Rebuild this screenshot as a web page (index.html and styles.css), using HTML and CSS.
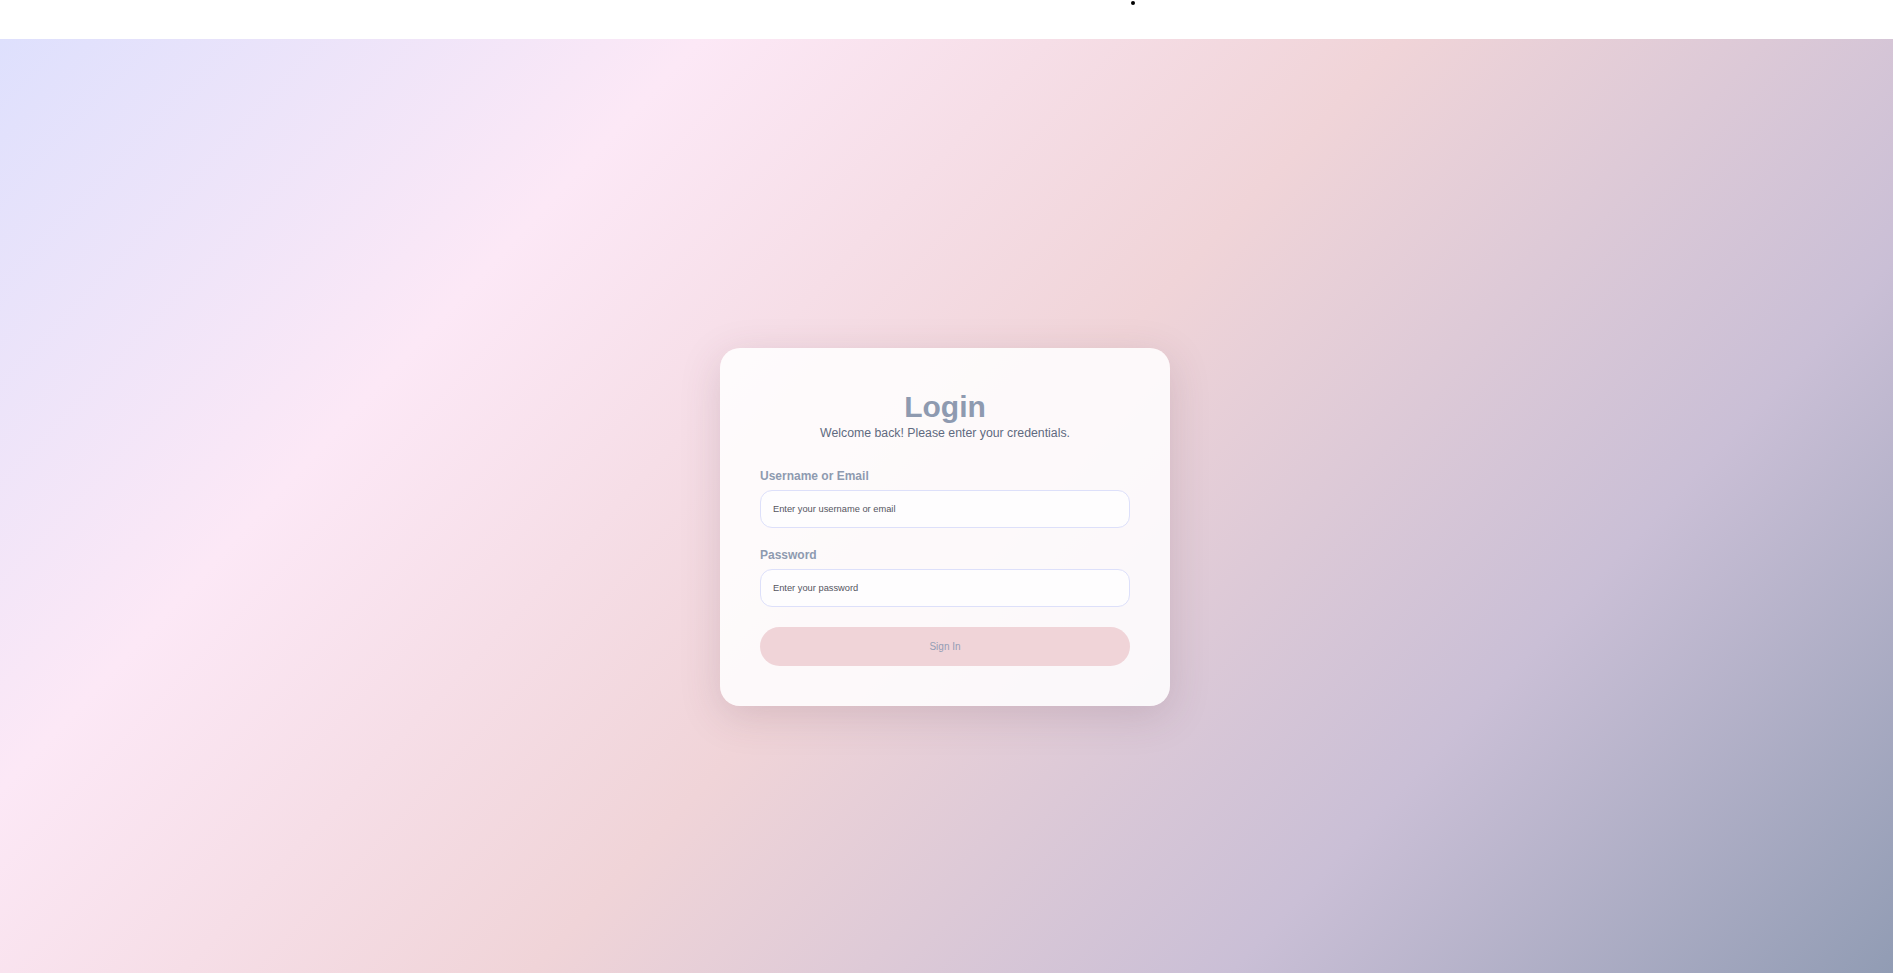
FILE: index.html
```html
<!DOCTYPE html>
<html lang="en">
<head>
<meta charset="utf-8">
<title>Login</title>
<link rel="stylesheet" href="styles.css">
</head>
<body>
<div class="topbar"><span class="dot"></span></div>
<main class="stage">
  <form class="card" onsubmit="return false">
    <div class="card-head">
      <h1 class="title">Login</h1>
      <p class="subtitle">Welcome back! Please enter your credentials.</p>
    </div>
    <div class="field">
      <label class="label" for="user">Username or Email</label>
      <input class="input" id="user" type="text" placeholder="Enter your username or email">
    </div>
    <div class="field">
      <label class="label" for="pass">Password</label>
      <input class="input" id="pass" type="password" placeholder="Enter your password">
    </div>
    <button class="btn" type="submit">Sign In</button>
  </form>
</main>
</body>
</html>
```

FILE: styles.css
```css
* { box-sizing: border-box; }
html, body { margin: 0; padding: 0; }
body {
  font-family: "Liberation Sans", Arial, sans-serif;
  background: #ffffff;
  overflow: hidden;
  height: 973px;
}
.topbar {
  height: 39px;
  background: #ffffff;
  display: flex;
  padding-left: 1131px;
  padding-top: 1px;
}
.dot {
  width: 4px;
  height: 4px;
  border-radius: 50%;
  background: #000;
}
.stage {
  height: 973px;
  display: flex;
  align-items: center;
  justify-content: center;
  padding-top: 3px;
  padding-right: 3px;
  background: linear-gradient(133deg, #dee0fd 0%, #fce8f6 25%, #f0d4d8 50%, #cabfd6 75%, #8e9ab2 100%);
}
.card {
  width: 450px;
  padding: 43px 40px 40px;
  border-radius: 20px;
  background: rgba(255, 255, 255, 0.86);
  box-shadow: 0 10px 40px rgba(90, 60, 80, 0.17);
}
.card-head {
  text-align: center;
  margin-bottom: 28px;
}
.title {
  margin: 0;
  font-size: 30px;
  line-height: 31px;
  font-weight: 700;
  color: #8e9ab0;
}
.subtitle {
  margin: 4px 0 0;
  font-size: 12.3px;
  line-height: 15px;
  color: #5f6a80;
}
.field { margin-bottom: 20px; }
.label {
  display: block;
  font-size: 12px;
  line-height: 15px;
  font-weight: 700;
  color: #8e9ab0;
  margin-bottom: 6px;
}
.input {
  display: block;
  width: 100%;
  height: 38px;
  padding: 0 12px;
  border: 1px solid #dde0fa;
  border-radius: 12px;
  background: #fefdfe;
  font-family: "Liberation Sans", Arial, sans-serif;
  font-size: 9.3px;
  color: #555;
  outline: none;
}
.input::placeholder { color: #55555f; }
.btn {
  display: block;
  width: 100%;
  height: 39px;
  border: none;
  border-radius: 20px;
  background: #f0d4d8;
  font-family: "Liberation Sans", Arial, sans-serif;
  font-size: 10px;
  color: #959db5;
  cursor: pointer;
}
```
